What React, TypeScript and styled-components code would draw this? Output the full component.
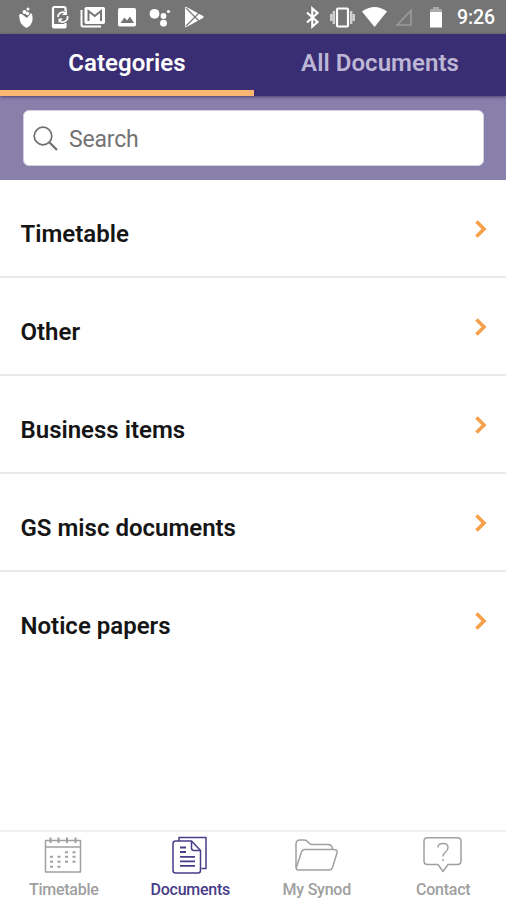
import React from 'react';
import styled, { createGlobalStyle } from 'styled-components';

const GlobalStyle = createGlobalStyle`
  *, *::before, *::after { box-sizing: border-box; }
  body { margin: 0; background: #fff; font-family: Roboto, "Liberation Sans", sans-serif; }
  button { font-family: inherit; border: 0; background: none; padding: 0; margin: 0; }
`;

const Screen = styled.div`
  width: 506px;
  height: 900px;
  display: flex;
  flex-direction: column;
  overflow: hidden;
  background: #fff;
`;

const StatusBar = styled.div`
  height: 34px;
  flex: none;
  display: flex;
  align-items: center;
  justify-content: space-between;
  background: #757575;
  color: #fff;
  padding: 0 10px 0 13px;
`;

const StatusGroup = styled.div<{ $gap: number }>`
  display: flex;
  align-items: center;
  gap: ${(p) => p.$gap}px;
`;

const StatusIcon = styled.svg`
  display: block;
  width: 26px;
  height: 26px;
  fill: #fff;
`;

const Clock = styled.span`
  width: 39px;
  margin-left: 3px;
  font-size: 19.5px;
  line-height: 34px;
  padding-top: 2px;
  font-weight: 500;
  letter-spacing: -0.1px;
  white-space: nowrap;
`;

const Tabs = styled.div`
  height: 62px;
  flex: none;
  display: grid;
  grid-template-columns: 254px 252px;
  background: #392d74;
  box-shadow: 0 1px 3px rgba(30, 20, 70, 0.55);
  z-index: 1;
`;

const Tab = styled.button<{ $active?: boolean }>`
  height: 62px;
  padding-top: 1px;
  border-bottom: 6px solid ${(p) => (p.$active ? '#fab673' : 'transparent')};
  color: ${(p) => (p.$active ? '#fff' : '#bdb6d4')};
  font-size: 24px;
  font-weight: 600;
  letter-spacing: 0.05px;
`;

const SearchArea = styled.div`
  height: 84px;
  flex: none;
  padding: 14px 22px 14px 23px;
  background: #887fab;
`;

const SearchBox = styled.label`
  height: 56px;
  display: flex;
  align-items: center;
  gap: 10px;
  padding: 2px 0 0 9px;
  background: #fff;
  border: 1px solid #d3d0dc;
  border-radius: 6px;
`;

const SearchInput = styled.input`
  flex: 1;
  min-width: 0;
  border: 0;
  outline: 0;
  padding: 0;
  font: 400 23px Roboto, sans-serif;
  letter-spacing: -0.2px;
  color: #222;
  &::placeholder { color: #737373; opacity: 1; }
`;

const List = styled.ul`
  flex: 1;
  margin: 0;
  padding: 0;
  list-style: none;
`;

const Row = styled.li`
  height: 98px;
  display: flex;
  align-items: center;
  justify-content: space-between;
  padding: 11px 19px 0 20.5px;
  border-bottom: 2px solid #e9e9e9;
  &:last-child { border-color: transparent; }
`;

const RowTitle = styled.span`
  padding-top: 1px;
  font-size: 24px;
  font-weight: 600;
  color: #151515;
  white-space: nowrap;
`;

const Chevron = styled.svg`
  width: 13px;
  height: 20px;
  margin-bottom: 9px;
  fill: none;
  stroke: #f7a04a;
  stroke-width: 3.6;
`;

const BottomNav = styled.nav`
  height: 70px;
  flex: none;
  display: grid;
  grid-template-columns: repeat(4, 1fr);
  border-top: 2px solid #f0f0f0;
`;

const NavItem = styled.button<{ $active?: boolean }>`
  display: flex;
  flex-direction: column;
  align-items: center;
  padding-top: 4px;
  color: ${(p) => (p.$active ? '#493d88' : '#a0a0a0')};
`;

const NavIcon = styled.svg`
  width: 48px;
  height: 42px;
  fill: none;
  stroke: currentColor;
  stroke-width: 1.5;
  stroke-linejoin: round;
`;

const NavLabel = styled.span`
  margin-top: 2px;
  padding-left: 1px;
  font-size: 16px;
  line-height: 20px;
  font-weight: 500;
  letter-spacing: -0.25px;
`;

const categories = ['Timetable', 'Other', 'Business items', 'GS misc documents', 'Notice papers'];

const TimetableIcon = () => (
  <NavIcon viewBox="0 0 48 42">
    <path d="M6.5 4.5H41.5V36H6.5ZM6.5 11H41.5" />
    <path d="M11.5 1.5V7M19.5 1.5V7M28 1.5V7M36.5 1.5V7" strokeWidth="2" />
    <path d="M26 16.2h3M33.5 16.2h3M11 20.7h3M18.5 20.7h3M26 20.7h3M33.5 20.7h3M11 25.7h3M18.5 25.7h3M26 25.7h3M33.5 25.7h3M11 30.7h3M18.5 30.7h3" strokeWidth="2" />
  </NavIcon>
);

const DocumentsIcon = () => (
  <NavIcon viewBox="0 0 48 42">
    <path d="M13 5V1.5H40V32.5H35.5" />
    <path d="M9.5 5H25.5L34.5 14.5V34.5Q34.5 37 32 37H9.5Q7 37 7 34.5V7.5Q7 5 9.5 5Z" />
    <path d="M25.5 5V12Q25.5 14.5 28 14.5H34.5" />
    <path d="M14 11.5h6M14 16h6M14 20.8h15M14 25.3h15M14 29.8h15" strokeWidth="1.8" />
  </NavIcon>
);

const FolderIcon = () => (
  <NavIcon viewBox="0 0 48 42">
    <path d="M4 32V8Q4 4 8 4H12Q14.5 4 16 6L17.5 7.500Q18.500 8.500 20 8.500H36Q40 8.500 40.500 13" />
    <path d="M13 13.500H41.500Q46 13.500 45 17L40.500 31.500Q39.500 34 37 34H6.500Q3.500 34 4.500 31L9.500 16Q10.300 13.500 13 13.500Z" />
  </NavIcon>
);

const ContactIcon = () => (
  <NavIcon viewBox="0 0 48 42">
    <path d="M8.500 1.800H38.500Q42 1.800 42 5.300V25Q42 28.500 38.500 28.500H29L24 35.500L19 28.500H8.500Q5 28.500 5 25V5.300Q5 1.800 8.500 1.800Z" />
    <path d="M19 11.500Q19 7.500 24 7.500Q29 7.500 29 11.500Q29 14 26.500 16Q24 18 24 20.500M24 23V25" />
  </NavIcon>
);

export default function App() {
  return (
    <>
      <GlobalStyle />
      <Screen>
        <StatusBar>
          <StatusGroup $gap={7.6}>
            <StatusIcon viewBox="0 0 26 26">
              <path d="M6 11Q8 9 10 11L14 14L18 9Q20 11 19.500 16Q19 21 13.500 24Q8 21 7 17Z" />
              <circle cx="11.500" cy="8" r="2" />
              <circle cx="15" cy="5" r="1.500" />
              <circle cx="14.500" cy="9.500" r="1.800" />
            </StatusIcon>
            <StatusIcon viewBox="0 0 26 26">
              <path d="M18.500 7V4.500Q18.500 3 17 3H7.500Q6 3 6 4.500V22Q6 23.500 7.500 23.500H17Q18.500 23.500 18.500 22V19" fill="none" stroke="#fff" strokeWidth="2.200" />
              <path d="M6 20H18.500V23H6Z" />
              <path d="M11 13A4.800 4.800 0 0 1 18.500 9M20.500 12A4.800 4.800 0 0 1 13 17" fill="none" stroke="#fff" strokeWidth="1.700" />
              <path d="M20 6V11H15ZM11.500 19V14.500H16Z" />
            </StatusIcon>
            <StatusIcon viewBox="0 0 26 26">
              <path d="M1.500 6V21Q1.500 22.500 3 22.500H21" fill="none" stroke="#fff" strokeWidth="2" />
              <rect x="4.500" y="3" width="20.500" height="17" rx="1.800" />
              <path d="M8.500 17V7L14.700 12L21 7V17" fill="none" stroke="#757575" strokeWidth="2" />
            </StatusIcon>
            <StatusIcon viewBox="0 0 26 26">
              <rect x="4" y="4" width="18" height="18.500" rx="1.800" />
              <path d="M6.500 19L10.500 13.500L13 16.500L16 12.500L20 19Z" fill="#757575" />
            </StatusIcon>
            <StatusIcon viewBox="0 0 26 26">
              <circle cx="7.500" cy="9.800" r="4.900" />
              <circle cx="16.500" cy="12" r="2.900" />
              <circle cx="21.500" cy="7.500" r="1.600" />
              <circle cx="16.500" cy="19.200" r="3.400" />
            </StatusIcon>
            <StatusIcon viewBox="0 0 26 26">
              <path d="M4 3.500Q4 2.500 5.500 3L22 12Q23.500 13 22 14L5.500 23Q4 23.500 4 22Z" />
              <path d="M5 4L18 17M5 22L18 9" stroke="#757575" strokeWidth="1.200" />
            </StatusIcon>
          </StatusGroup>
          <StatusGroup $gap={5}>
            <StatusIcon viewBox="0 0 26 26">
              <path d="M8 8.500L18.500 18L13.300 22.500V4.500L18.500 9L8 18.500" fill="none" stroke="#fff" strokeWidth="2.200" />
            </StatusIcon>
            <StatusIcon viewBox="0 0 26 26">
              <rect x="7" y="4.500" width="11" height="18" rx="1" fill="none" stroke="#fff" strokeWidth="2.200" />
              <path d="M3.800 7V20M21.200 7V20M1.200 10V17M23.800 10V17" stroke="#d0d0d0" strokeWidth="2.400" />
            </StatusIcon>
            <StatusIcon viewBox="0 0 26 26">
              <path d="M1 7.500Q13.500 -1.500 26 7.500L13.500 23Z" />
            </StatusIcon>
            <StatusIcon viewBox="0 0 26 26">
              <path d="M5 21L19 6.500V21Z" fill="none" stroke="#9b9b9b" strokeWidth="1.600" />
            </StatusIcon>
            <StatusIcon viewBox="0 0 26 26">
              <path d="M10 3H16V5H19V9H7V5H10Z" fill="#aaa" />
              <rect x="7" y="8" width="12" height="15.500" rx="0.500" />
            </StatusIcon>
            <Clock>9:26</Clock>
          </StatusGroup>
        </StatusBar>
        <Tabs>
          <Tab $active>Categories</Tab>
          <Tab>All Documents</Tab>
        </Tabs>
        <SearchArea>
          <SearchBox>
            <svg width="26" height="26" viewBox="0 0 26 26" fill="none" stroke="#707070">
              <circle cx="10" cy="10" r="8.800" strokeWidth="1.700" />
              <path d="M16.500 16.500L24 24" strokeWidth="2.300" />
            </svg>
            <SearchInput placeholder="Search" />
          </SearchBox>
        </SearchArea>
        <List>
          {categories.map((title) => (
            <Row key={title}>
              <RowTitle>{title}</RowTitle>
              <Chevron viewBox="0 0 13 20">
                <path d="M2.500 2.500L10 10L2.500 17.500" />
              </Chevron>
            </Row>
          ))}
        </List>
        <BottomNav>
          <NavItem>
            <TimetableIcon />
            <NavLabel>Timetable</NavLabel>
          </NavItem>
          <NavItem $active>
            <DocumentsIcon />
            <NavLabel>Documents</NavLabel>
          </NavItem>
          <NavItem>
            <FolderIcon />
            <NavLabel>My Synod</NavLabel>
          </NavItem>
          <NavItem>
            <ContactIcon />
            <NavLabel>Contact</NavLabel>
          </NavItem>
        </BottomNav>
      </Screen>
    </>
  );
}
